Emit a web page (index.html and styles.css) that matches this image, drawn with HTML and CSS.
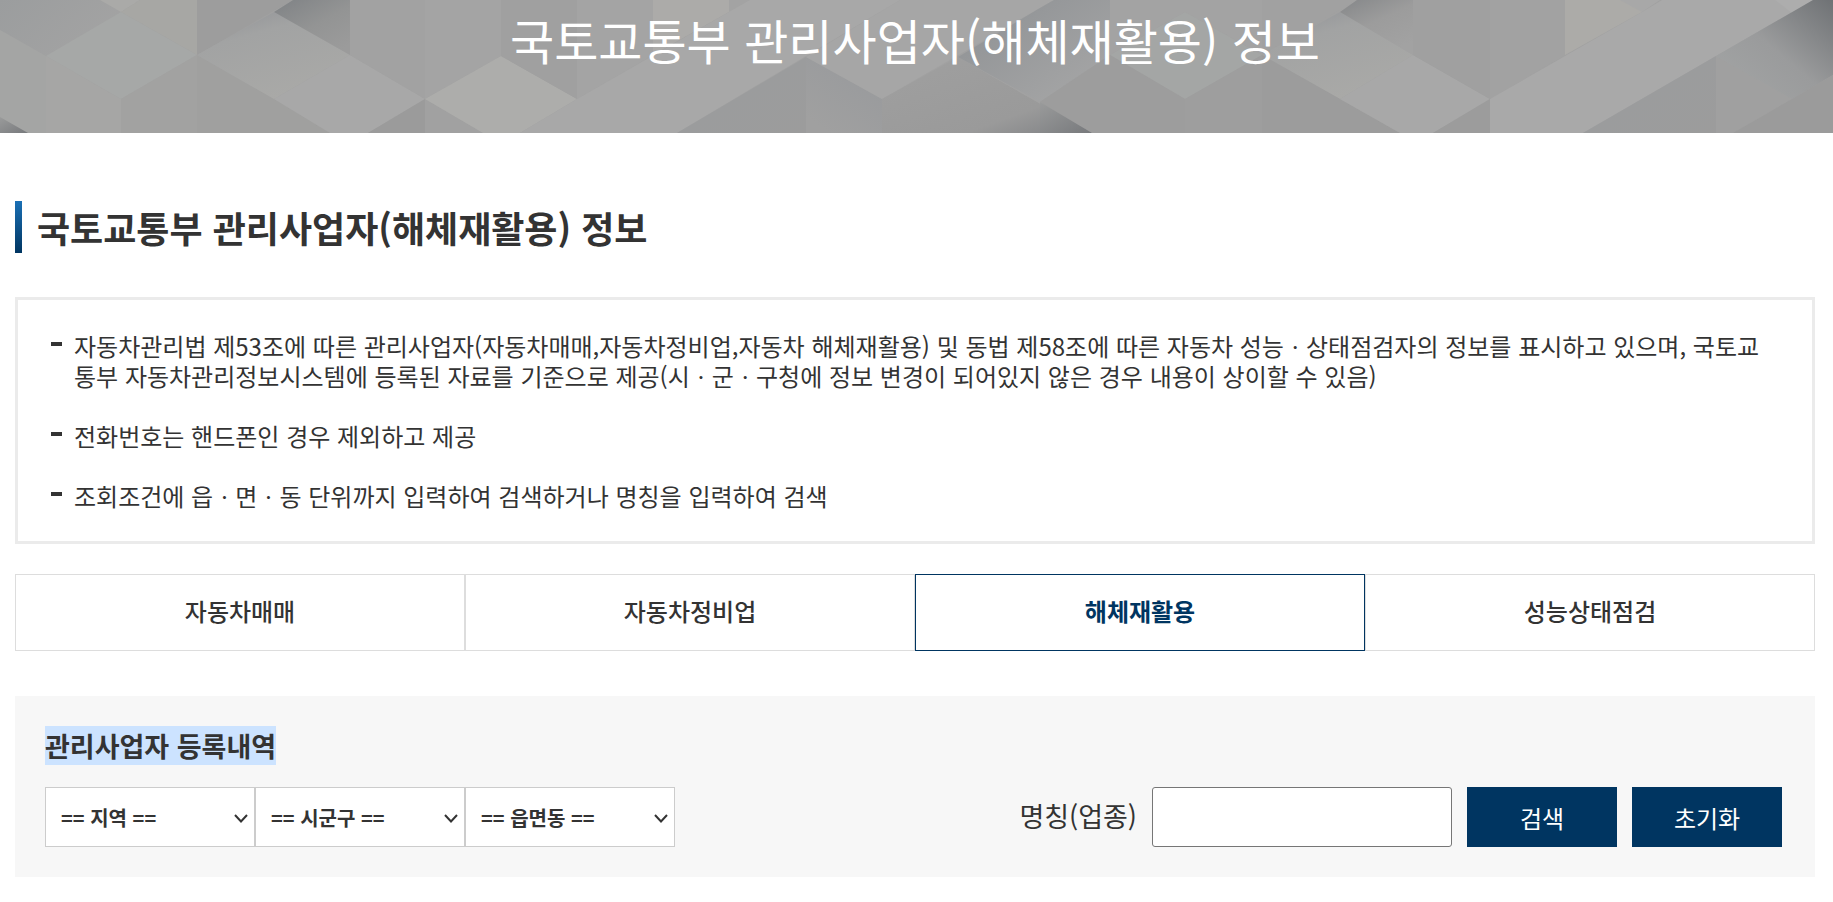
FILE: index.html
```html
<!DOCTYPE html>
<html lang="ko">
<head>
<meta charset="utf-8">
<title>국토교통부 관리사업자(해체재활용) 정보</title>
<link rel="stylesheet" href="styles.css">
</head>
<body>
<header class="banner">
  <svg class="banner-art" viewBox="0 0 1833 133" preserveAspectRatio="none" aria-hidden="true">
    <defs>
      <linearGradient id="sh1" x1="0" y1="0" x2="0.75" y2="1"><stop offset="0" stop-color="#7f8285"/><stop offset="0.55" stop-color="#939494"/><stop offset="1" stop-color="#9b9b9b"/></linearGradient>
      <linearGradient id="sh2" x1="0" y1="0" x2="0.5" y2="1"><stop offset="0" stop-color="#8f9195"/><stop offset="0.35" stop-color="#a2a3a3"/><stop offset="1" stop-color="#a9a9a7"/></linearGradient>
      <linearGradient id="sh3" x1="0" y1="0" x2="1" y2="1"><stop offset="0" stop-color="#a0a0a0"/><stop offset="0.7" stop-color="#9a9a9a"/><stop offset="1" stop-color="#7e8083"/></linearGradient>
      <linearGradient id="sh4" x1="0" y1="0" x2="0.6" y2="1"><stop offset="0" stop-color="#858789"/><stop offset="0.5" stop-color="#9c9c9c"/><stop offset="1" stop-color="#a2a2a2"/></linearGradient>
      <linearGradient id="sh5" x1="1" y1="0" x2="0.3" y2="1"><stop offset="0" stop-color="#97999c"/><stop offset="1" stop-color="#a0a0a0"/></linearGradient>
      <linearGradient id="sh6" x1="0" y1="0" x2="1" y2="1"><stop offset="0" stop-color="#9a9c9e"/><stop offset="1" stop-color="#9c9c9c"/></linearGradient>
      <linearGradient id="sh7" x1="0" y1="0" x2="1" y2="1"><stop offset="0" stop-color="#8d9093"/><stop offset="1" stop-color="#a8a8a8"/></linearGradient>
      <linearGradient id="sh8" x1="1" y1="0" x2="0" y2="1"><stop offset="0" stop-color="#6f7275"/><stop offset="0.5" stop-color="#9a9b9c"/><stop offset="1" stop-color="#a4a6a6"/></linearGradient>
      <linearGradient id="tl" x1="0" y1="0" x2="1" y2="0.5"><stop offset="0" stop-color="#9b9d9e"/><stop offset="1" stop-color="#a3a3a3"/></linearGradient>
      <linearGradient id="bl" x1="0" y1="0" x2="1" y2="1"><stop offset="0" stop-color="#9a9b9b"/><stop offset="1" stop-color="#77797c"/></linearGradient>
    </defs>
    <rect width="1833" height="133" fill="#a1a1a1"/>
    <polygon points="0,0 100,0 121,12 46,56 0,30" fill="url(#tl)"/>
    <polygon points="100,0 140,0 121,12" fill="#aaaaa8"/>
    <polygon points="0,30 46,56 46,133 0,133" fill="#a4a5a4"/>
    <polygon points="0,117 28,133 0,133" fill="url(#bl)"/>
    <polygon points="46,56 121,99 121,133 46,133" fill="#a6a6a5"/>
    <polygon points="121,12 140,0 197,0 197,55" fill="#a7a7a4"/>
    <polygon points="46,56 121,12 197,55 121,99" fill="#a6a8a7"/>
    <polygon points="197,0 293,0 197,55" fill="#9d9d9d"/>
    <polygon points="121,99 197,55 197,133 121,133" fill="#a2a2a1"/>
    <polygon points="197,55 274,99 330,133 197,133" fill="#a0a09f"/>
    <polygon points="197,55 274,12 350,55 274,99" fill="url(#sh2)"/>
    <polygon points="274,12 293,0 350,0 350,55" fill="url(#sh1)"/>
    <polygon points="274,99 350,55 425,99 368,133 330,133" fill="#a8a8a8"/>
    <polygon points="350,0 425,0 425,99 350,55" fill="#a2a2a2"/>
    <polygon points="425,0 501,0 501,56 425,99" fill="#a4a4a4"/>
    <polygon points="368,133 425,99 425,133" fill="#9b9b9b"/>
    <polygon points="425,99 483,133 425,133" fill="#a1a1a1"/>
    <polygon points="425,99 501,56 577,99 520,133 483,133" fill="#adadab"/>
    <polygon points="501,0 577,0 577,99 501,56" fill="#a0a0a0"/>
    <polygon points="577,0 653,0 653,55 577,99" fill="#a4a4a4"/>
    <polygon points="653,0 729,0 729,12 653,55" fill="#acaba9"/>
    <polygon points="729,0 900,0 806,57 729,12" fill="#a3a3a3"/>
    <polygon points="577,99 750,0 900,0 677,133 520,133" fill="#a8a8a8"/>
    <polygon points="653,55 750,0 729,12" fill="#acaba9"/>
    <polygon points="677,133 806,57 806,133" fill="url(#sh6)"/>
    <polygon points="806,57 882,99 882,133 806,133" fill="url(#sh5)"/>
    <polygon points="806,57 900,0 1054,0 882,99" fill="#a6a6a6"/>
    <polygon points="882,99 958,57 1092,133 882,133" fill="url(#sh3)"/>
    <polygon points="958,57 1054,0 1110,0 1110,55 1185,99 1185,133 1092,133" fill="#a2a2a2"/>
    <polygon points="958,57 1040,8 1054,0 1110,0 1110,55 1040,102" fill="url(#sh7)"/>
    <polygon points="1040,102 1110,55 1110,133 1092,133" fill="#9e9e9e"/>
    <polygon points="1110,0 1262,0 1262,55 1185,12 1110,55" fill="#a3a3a3"/>
    <polygon points="1110,55 1185,12 1262,55 1185,99" fill="#a4a6a5"/>
    <polygon points="1110,55 1185,99 1185,133 1092,133 1040,102" fill="#9d9d9d"/>
    <polygon points="1040,102 1092,133 1040,133" fill="url(#bl)"/>
    <polygon points="1185,99 1262,55 1262,133 1185,133" fill="#9e9e9e"/>
    <polygon points="1262,0 1357,0 1262,55" fill="#a1a1a1"/>
    <polygon points="1262,55 1340,12 1413,55 1340,99" fill="url(#sh2)"/>
    <polygon points="1340,12 1357,0 1413,0 1413,55" fill="url(#sh4)"/>
    <polygon points="1262,55 1340,99 1400,133 1262,133" fill="#9c9c9c"/>
    <polygon points="1340,99 1413,55 1490,99 1433,133 1400,133" fill="#a8a8a8"/>
    <polygon points="1413,0 1490,0 1490,99 1413,55" fill="#a0a0a0"/>
    <polygon points="1433,133 1490,99 1490,133" fill="#9c9c9c"/>
    <polygon points="1490,0 1565,0 1565,55 1490,99" fill="#a2a2a2"/>
    <polygon points="1565,0 1642,0 1642,12 1565,55" fill="#acaba8"/>
    <polygon points="1620,0 1660,0 1642,12" fill="#a8a8a8"/>
    <polygon points="1490,99 1642,12 1662,0 1813,0 1583,133 1490,133" fill="#a9a9a9"/>
    <polygon points="1775,0 1813,0 1792,13" fill="#adadad"/>
    <polygon points="1583,133 1716,56 1716,133" fill="url(#sh6)"/>
    <polygon points="1716,56 1792,99 1733,133 1716,133" fill="#a0a0a0"/>
    <polygon points="1716,56 1813,0 1833,0 1833,75 1792,99" fill="url(#sh8)"/>
    <polygon points="1733,133 1792,99 1833,75 1833,133" fill="#9b9b9b"/>
  </svg>
  <h1 class="banner-title">국토교통부 관리사업자(해체재활용) 정보</h1>
</header>

<main class="page">
  <h2 class="page-heading">국토교통부 관리사업자(해체재활용) 정보</h2>

  <ul class="notice">
    <li class="notice-item"><span>자동차관리법 제53조에 따른 관리사업자(자동차매매,자동차정비업,자동차 해체재활용) 및 동법 제58조에 따른 자동차 성능ㆍ상태점검자의 정보를 표시하고 있으며, 국토교통부 자동차관리정보시스템에 등록된 자료를 기준으로 제공(시ㆍ군ㆍ구청에 정보 변경이 되어있지 않은 경우 내용이 상이할 수 있음)</span></li>
    <li class="notice-item"><span>전화번호는 핸드폰인 경우 제외하고 제공</span></li>
    <li class="notice-item"><span>조회조건에 읍ㆍ면ㆍ동 단위까지 입력하여 검색하거나 명칭을 입력하여 검색</span></li>
  </ul>

  <nav class="tabs">
    <a class="tab" href="#">자동차매매</a>
    <a class="tab" href="#">자동차정비업</a>
    <a class="tab tab-active" href="#">해체재활용</a>
    <a class="tab" href="#">성능상태점검</a>
  </nav>

  <section class="search">
    <h3 class="search-title"><span class="selected">관리사업자 등록내역</span></h3>
    <form class="search-row">
      <select class="area-select"><option>== 지역 ==</option></select>
      <select class="area-select"><option>== 시군구 ==</option></select>
      <select class="area-select"><option>== 읍면동 ==</option></select>
      <label class="name-label" for="name">명칭(업종)</label>
      <input class="name-input" id="name" type="text">
      <button class="btn" type="button">검색</button>
      <button class="btn" type="button">초기화</button>
    </form>
  </section>
</main>
</body>
</html>
```

FILE: styles.css
```css
* { box-sizing: border-box; }

html, body {
  margin: 0;
  padding: 0;
  background: #fff;
}

body {
  font-family: "Noto Sans CJK KR", "Noto Sans", sans-serif;
  color: #333;
  overflow: hidden;
}

.banner {
  display: grid;
  height: 133px;
  overflow: hidden;
}

.banner-art {
  grid-area: 1 / 1;
  display: block;
  width: 100%;
  height: 133px;
}

.banner-title {
  grid-area: 1 / 1;
  margin: 0;
  height: 78px;
  padding-right: 3px;
  font-size: 48px;
  font-weight: 400;
  line-height: 78px;
  color: #fff;
  text-align: center;
}

.page {
  width: 1800px;
  margin-left: 15px;
}

.page-heading {
  display: flex;
  align-items: center;
  height: 52px;
  margin: 68px 0 44px;
  padding-left: 22px;
  font-size: 36px;
  font-weight: 700;
  color: #333;
  background: linear-gradient(#1a70b5, #003561) left top / 7px 100% no-repeat;
}

.notice {
  list-style: none;
  margin: 0;
  padding: 31px 42px 30px 33px;
  border: 3px solid #ebebeb;
}

.notice-item {
  display: flex;
  font-size: 24px;
  line-height: 30px;
  color: #333;
}

.notice-item + .notice-item {
  margin-top: 30px;
}

.notice-item::before {
  content: "";
  flex: none;
  width: 11px;
  height: 4px;
  margin: 11px 12px 0 0;
  background: #333;
}

.tabs {
  display: flex;
  margin-top: 30px;
}

.tab {
  flex: 1;
  height: 77px;
  border: 1px solid #ddd;
  font-size: 24px;
  font-weight: 500;
  line-height: 71px;
  color: #333;
  text-align: center;
  text-decoration: none;
}

.tab-active {
  border-color: #003561;
  font-weight: 700;
  color: #003561;
}

.search {
  height: 181px;
  margin-top: 45px;
  padding: 30px 33px 0 30px;
  background: #f7f7f7;
}

.search-title {
  margin: 0 0 22px;
  font-size: 27px;
  font-weight: 700;
  line-height: 39px;
  color: #333;
}

.selected {
  display: inline-block;
  background: #cce3ff;
}

.search-row {
  display: flex;
  align-items: center;
}

.area-select {
  appearance: none;
  width: 210px;
  height: 60px;
  padding-left: 15px;
  border: 1px solid #ccc;
  border-radius: 0;
  background: #fff url("data:image/svg+xml,%3Csvg xmlns='http://www.w3.org/2000/svg' width='14' height='9' viewBox='0 0 14 9'%3E%3Cpath d='M1 1l6 6.5L13 1' fill='none' stroke='%23333' stroke-width='2'/%3E%3C/svg%3E") no-repeat right 6px top 26px;
  font-family: inherit;
  font-size: 20px;
  font-weight: 700;
  color: #333;
}

.name-label {
  margin: 0 15px 4px auto;
  font-size: 27px;
  color: #333;
}

.name-input {
  width: 300px;
  height: 60px;
  margin-right: 15px;
  border: 1px solid #767676;
  border-radius: 3px;
  background: #fff;
}

.btn {
  width: 150px;
  height: 60px;
  border: 0;
  background: #003561;
  font-family: inherit;
  font-size: 24px;
  color: #fff;
}

.btn + .btn {
  margin-left: 15px;
}
```
